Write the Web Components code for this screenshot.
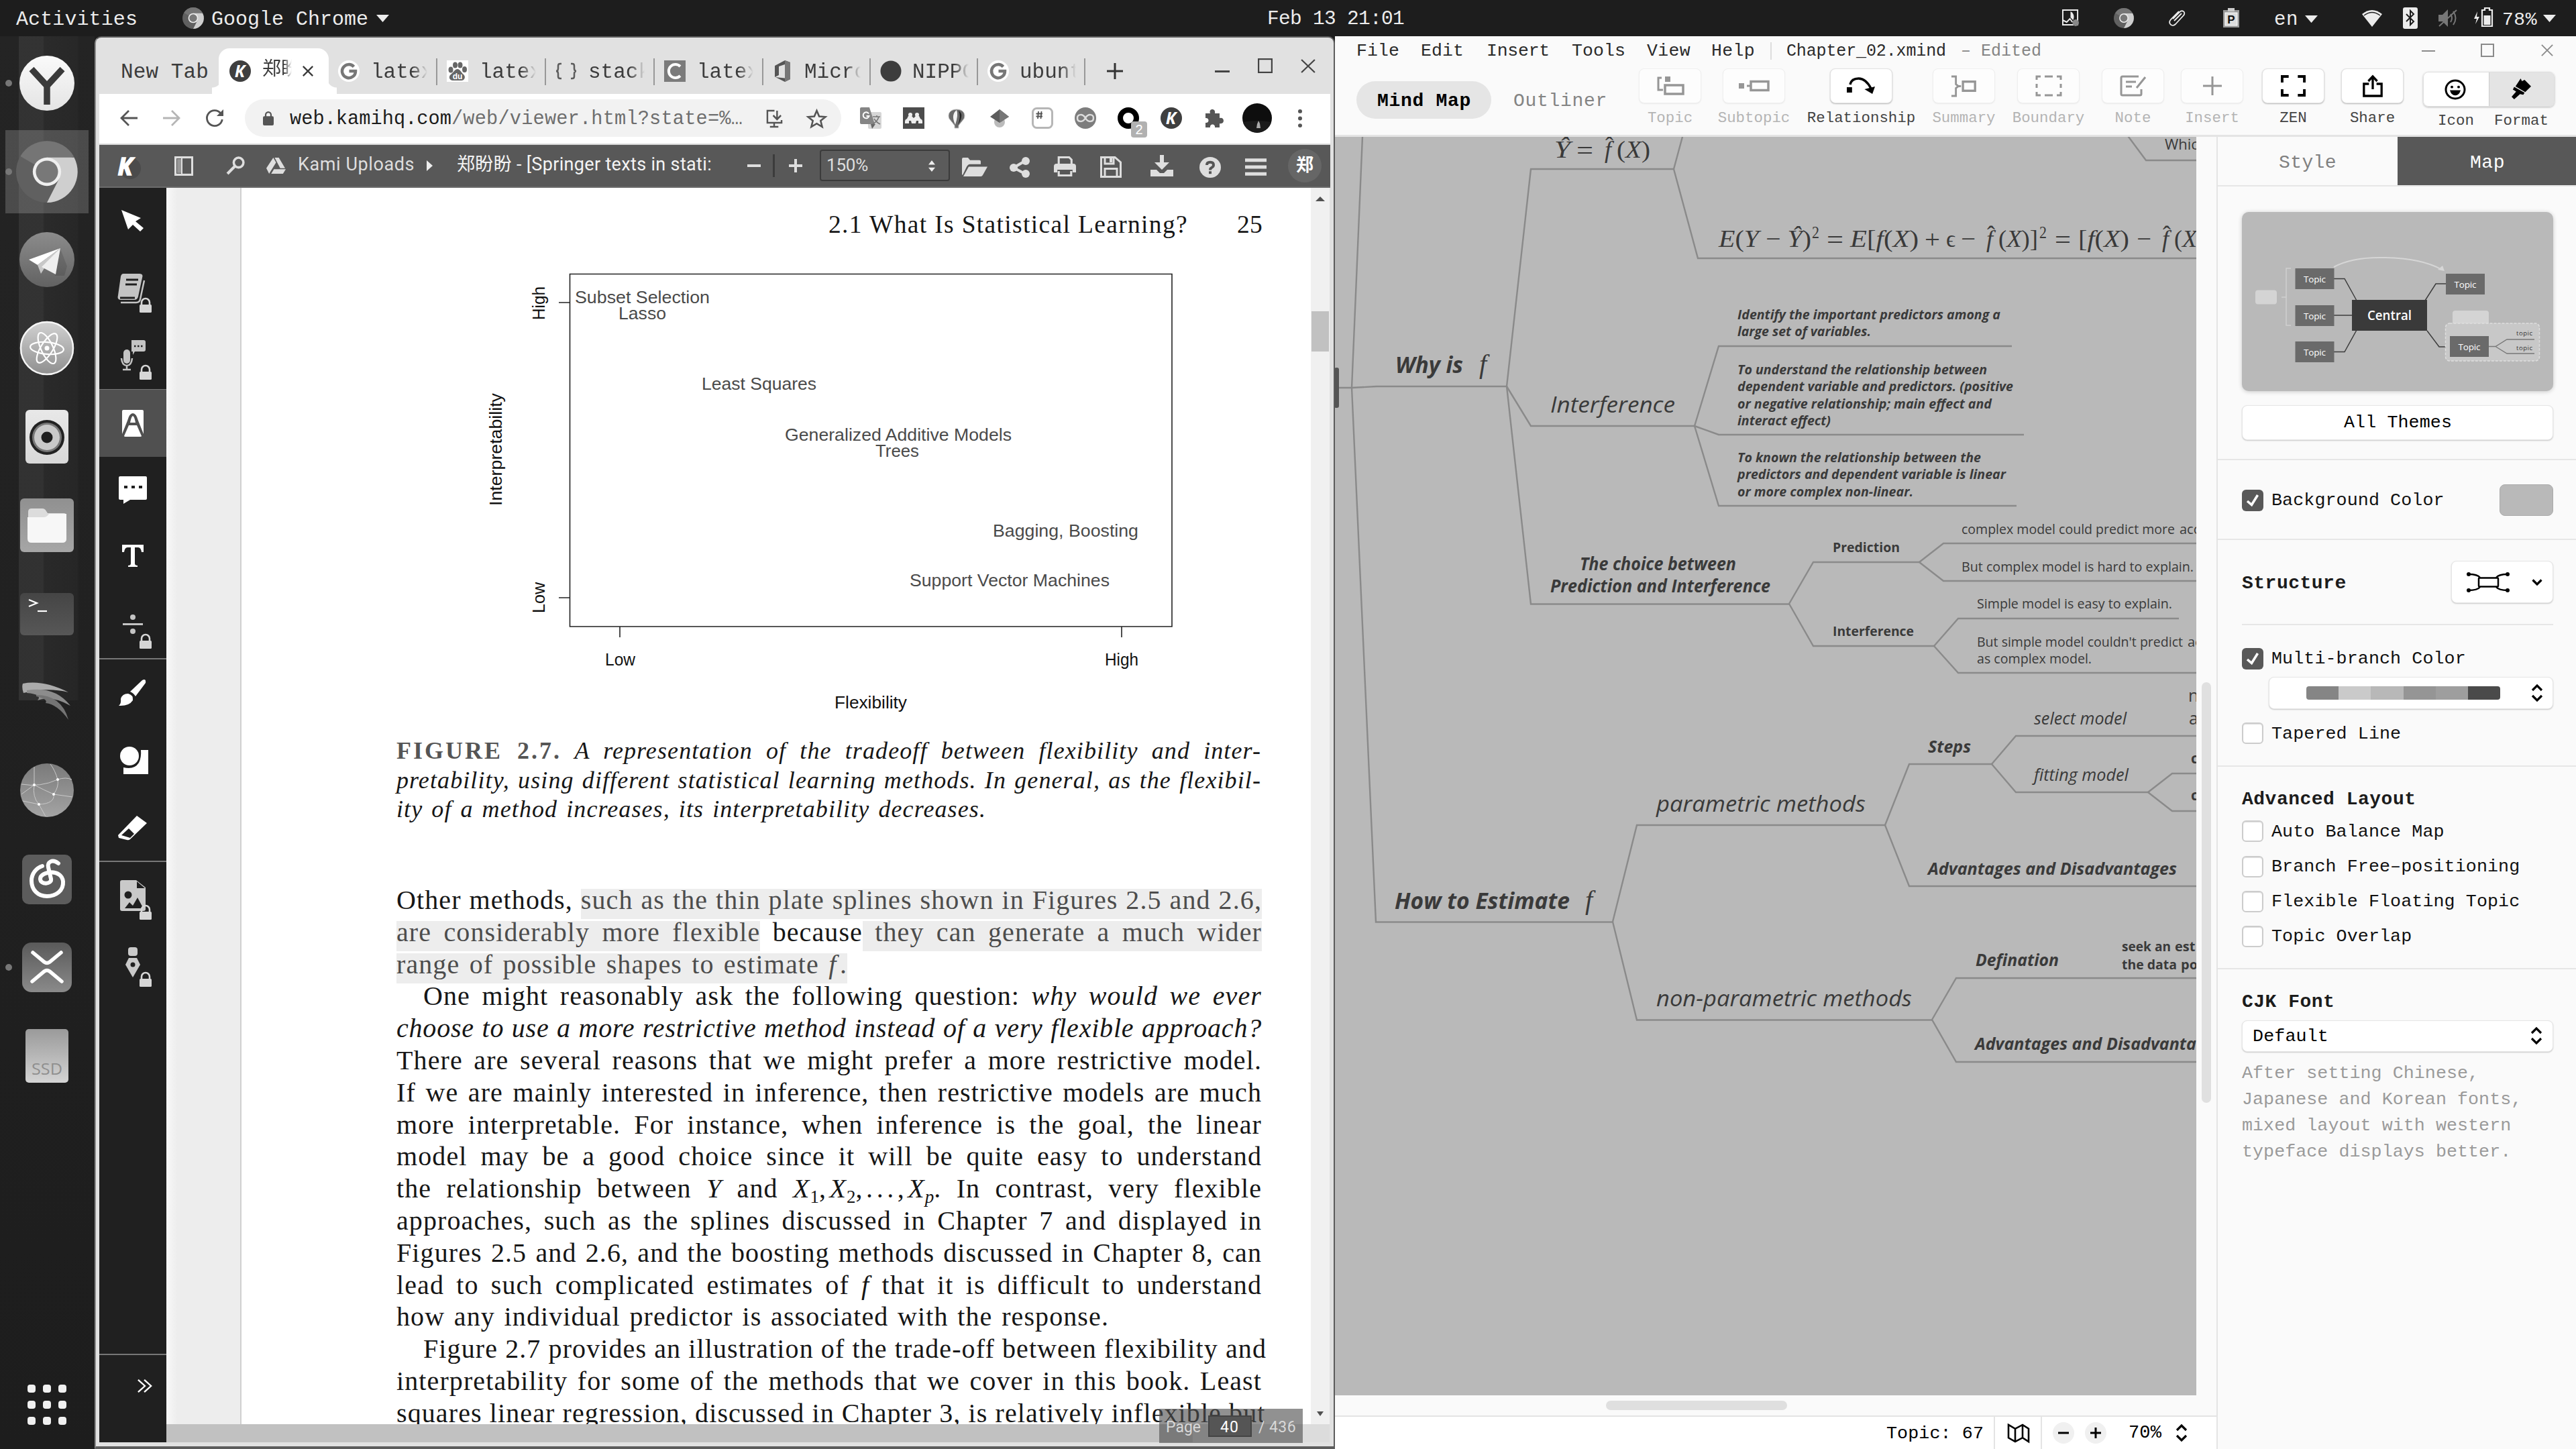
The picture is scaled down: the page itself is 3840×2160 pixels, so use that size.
<!DOCTYPE html>
<html lang="en">
<head>
<meta charset="utf-8">
<title>Desktop</title>
<style>
html,body{margin:0;padding:0;width:3840px;height:2160px;overflow:hidden;background:#1d1d1d}
</style>
</head>
<body>
<desk-top></desk-top>
<script>
const MONO = "'Liberation Mono','Noto Sans CJK SC',monospace";
const ROBO = "Roboto,'Noto Sans CJK SC',sans-serif";
const SERIF = "'Liberation Serif',serif";
const OPEN = "'Open Sans','Noto Sans',sans-serif";
// half of (ascent - descent), used to put a baseline at a given offset
const SHIFT = new Map([[MONO, .2665], [ROBO, .3418], [SERIF, .3375], [OPEN, .388]]);

const BASE = `<style>
*{box-sizing:border-box}
.row{display:flex;align-items:flex-start;flex:none}
.i{flex:none;min-width:0}
svg{display:block;overflow:visible}
</style>`;

const R = (x0, h, items, style = '') => {
  let c = x0, s = '';
  for (const it of items) {
    s += `<div class="i" style="margin-left:${(it.x - c).toFixed(1)}px;margin-top:${(it.y).toFixed(1)}px;width:${it.w}px;${it.s || ''}">${it.c || ''}</div>`;
    c = it.x + it.w;
  }
  return `<div class="row" style="height:${h}px;${style}">${s}</div>`;
};
const T = (x, b, w, size, text, style = '', fam = MONO) => ({
  x, y: b - size / 2 - SHIFT.get(fam) * size, w,
  s: `font:${size}px/${size}px ${fam};${style}`,
  c: `<fit-text w="${w}">${text}</fit-text>`
});
const I = (x, y, w, h, name, color = '#5c5c5c', extra = '') => ({ x, y, w, s: `height:${h}px;color:${color};${extra}`, c: `<ui-icon name="${name}" w="${w}" h="${h}"></ui-icon>` });
const B = (x, y, w, h, style, c = '') => ({ x, y, w, s: `height:${h}px;${style}`, c });

class Base extends HTMLElement {
  connectedCallback() {
    if (this.shadowRoot) return;
    this.attachShadow({ mode: 'open' });
    this.shadowRoot.innerHTML = BASE + this.html();
    this.ready && this.ready();
  }
}

// Text spread over a given width by letter spacing
customElements.define('fit-text', class extends Base {
  html() { return `<style>:host{display:block;white-space:pre}span{display:inline-block;letter-spacing:0}</style><span><slot></slot></span>`; }
  ready() {
    const s = this.shadowRoot.querySelector('span');
    const w = +this.getAttribute('w'), n = [...this.textContent].length;
    s.style.letterSpacing = ((w - s.getBoundingClientRect().width) / n) + 'px';
  }
});

const dock = (r, g1, g2) => `<circle cx="50" cy="50" r="${r}" fill="url(#g)"/><defs><linearGradient id="g" x1="0" y1="0" x2="0" y2="1"><stop offset="0" stop-color="${g1}"/><stop offset="1" stop-color="${g2}"/></linearGradient></defs>`;
const box = (x, y, w, h, r, g1, g2) => `<defs><linearGradient id="g" x1="0" y1="0" x2="0" y2="1"><stop offset="0" stop-color="${g1}"/><stop offset="1" stop-color="${g2}"/></linearGradient></defs><rect x="${x}" y="${y}" width="${w}" height="${h}" rx="${r}" fill="url(#g)"/>`;
const S = (w = 2) => `fill="none" stroke="currentColor" stroke-width="${w}"`;
const CHROME = `<circle cx="50" cy="50" r="50" fill="#606060"/><path d="M50 50L7 25A50 50 0 0 1 93.300 25z" fill="#757575"/><path d="M50 27H94A50 50 0 0 1 50 100L70 61z" fill="#cfcfcf"/><circle cx="50" cy="50" r="23" fill="#efefef"/><circle cx="50" cy="50" r="18" fill="#787878"/>`;
const ICONS = {
  chrome: ['0 0 100 100', CHROME],
  tri: ['0 0 20 12', `<path d="M0 0h20L10 12z" fill="currentColor"/>`],
  triR: ['0 0 9 16', `<path d="M0 0v16l9-8z" fill="currentColor"/>`],
  // dock
  dY: ['0 0 100 100', dock(41, '#fafafa', '#e4e4e4') + `<path d="M27 29L50 54L73 29M50 54V82" fill="none" stroke="#3a3a3a" stroke-width="9.500"/>`],
  dChrome: ['0 0 100 100', `<g transform="translate(4 4) scale(.92)">${CHROME}</g>`],
  dTele: ['0 0 100 100', dock(41, '#8c8c8c', '#626262') + `<path d="M70 34L80 60L76 74L62 74z" fill="#000" opacity=".12"/><path d="M70 33L23 50L36 58z" fill="#fff"/><path d="M70 33L36 58L41 71L46 63z" fill="#c8c8c8"/><path d="M70 33L42 61L63 72z" fill="#efefef"/>`],
  dAtom: ['0 0 100 100', dock(40, '#d2d2d2', '#8e8e8e') + `<circle cx="50" cy="50" r="39" fill="none" stroke="#f4f4f4" stroke-width="2.500"/><g fill="none" stroke="#fff" stroke-width="2.200"><ellipse cx="50" cy="50" rx="25" ry="9" transform="rotate(5 50 50)"/><ellipse cx="50" cy="50" rx="25" ry="9" transform="rotate(65 50 50)"/><ellipse cx="50" cy="50" rx="25" ry="9" transform="rotate(122 50 50)"/></g><circle cx="50" cy="50" r="3.500" fill="#fff"/>`],
  dSpk: ['0 0 100 100', box(18, 10, 64, 80, 6, '#e8e8e8', '#d8d8d8') + `<circle cx="50" cy="51" r="26" fill="#222"/><circle cx="50" cy="51" r="22" fill="#777"/><circle cx="50" cy="51" r="19" fill="#c9c9c9"/><circle cx="50" cy="51" r="8.500" fill="#1e1e1e"/>`],
  dFold: ['0 0 100 100', box(10, 10, 80, 80, 6, '#909090', '#a6a6a6') + `<path d="M22 30q0-5 5-5h16q4 0 6 4l2 3h24q4 0 4 4v34q0 5-5 5H27q-5 0-5-5z" fill="#dcdcdc"/><path d="M21 38h24q5 0 8-5h26v37q0 6-6 6H27q-6 0-6-6z" fill="#f7f7f7"/>`],
  dTerm: ['0 0 100 100', box(10, 19, 80, 63, 6, '#454545', '#575757') + `<path d="M23 29l12 5l-12 5" fill="none" stroke="#fff" stroke-width="2.200"/><path d="M36 46H50" stroke="#fff" stroke-width="2.200"/>`],
  dVine: ['0 0 100 100', box(0, 0, 0, 0, 0, '#aaa', '#666') + `<path d="M14 23Q44 17 82 36Q50 28 15 37Q12 28 14 23z" fill="#ababab"/><path d="M20 33Q62 26 85 56Q56 40 36 48Q44 39 20 37z" fill="#8c8c8c"/><path d="M34 40Q72 40 82 77Q66 54 48 52Q52 46 34 42z" fill="#747474"/>`],
  dNet: ['0 0 100 100', dock(40, '#7a7a7a', '#a4a4a4') + `<g fill="none" stroke="#c9c9c9" stroke-width="1"><path d="M12 41Q40 46 66 34Q78 30 87 34M31 42Q28 60 38 71Q62 70 60 56Q68 45 66 34Q62 20 55 11M31 42L31 15M31 42Q46 50 60 56L88 60M38 71L14 66M38 71L48 89M31 42L12 56"/></g><g fill="#fff"><circle cx="31" cy="42" r="2"/><circle cx="66" cy="34" r="2"/><circle cx="60" cy="56" r="2"/><circle cx="38" cy="71" r="2"/></g>`],
  dMusic: ['0 0 100 100', box(13, 14, 74, 74, 10, '#5c5c5c', '#5c5c5c') + `<g fill="none" stroke="#fff" stroke-width="6" stroke-linecap="round"><path d="M67 27C58 20 50 25 52 33L56 50C58 58 40 60 40 50C40 39 72 34 74 54C75 68 63 76 50 76C36 76 27 66 27 53C27 42 34 34 43 31"/></g>`],
  dXm: ['0 0 100 100', box(13, 13, 74, 74, 14, '#5a5a5a', '#8a8a8a') + `<path d="M29 28L46 42Q50 45 54 42L71 28M28 71L46 56Q50 53 54 56L72 71" fill="none" stroke="#fff" stroke-width="5.500" stroke-linecap="round"/>`],
  dSsd: ['0 0 100 100', box(18, 10, 64, 80, 5, '#9a9a9a', '#d4d4d4') + `<text x="50" y="78" font-family="Open Sans" font-size="24" text-anchor="middle" textLength="46" lengthAdjust="spacingAndGlyphs" fill="#8f8f8f">SSD</text>`],
  apps: ['0 0 58 60', [0, 23, 46].map(x => [0, 24, 48].map(y => `<rect x="${x}" y="${y}" width="12" height="12" rx="4" fill="#f0f0f0"/>`).join('')).join('')],
  // top bar
  shot: ['0 0 26 26', `<path d="M1 1h23v22H1zM1 16l6 3l5-5l4 5" ${S(2)}/><path d="M13 3c6 3 6 9 4 13l-4-4z" fill="currentColor"/><circle cx="21" cy="20" r="5" fill="#888"/>`],
  clip: ['0 0 28 26', `<path d="M7 14L17 4C21 0 27 4 23 9L11 22C6 27-1 21 4 15L16 3M9 17L20 6" ${S(1.800)}/>`],
  board: ['0 0 24 30', `<rect x="0" y="3" width="24" height="26" fill="#999"/><rect x="3" y="7" width="18" height="19" fill="#ddd" stroke="#fff"/><rect x="7" y="0" width="10" height="5" fill="#ccc"/><text x="12" y="23" font-family="Liberation Sans" font-size="17" font-weight="bold" text-anchor="middle" fill="#111">P</text>`],
  wifi: ['0 0 30 25', `<path d="M0 6Q15-6 30 6L15 25z" fill="currentColor"/><path d="M3 8Q15-1 27 8" fill="none" stroke="#1d1d1d" stroke-width="1.500"/>`],
  bt: ['0 0 22 32', `<rect width="22" height="32" rx="3" fill="currentColor"/><path d="M5 10L16 21L11 26V5L16 10L5 21" fill="none" stroke="#1d1d1d" stroke-width="2"/>`],
  vol: ['0 0 30 28', `<path d="M1 9h6l8-8v26l-8-8H1z" fill="currentColor"/><path d="M19 8q4 6 0 12M23 4q7 10 0 20M2 26L28 2" ${S(2)}/>`],
  batt: ['0 0 30 30', `<path d="M5 6L0 17h4l-2 8l6-11H4z" fill="currentColor"/><path d="M16 1h7v3h4v24H12V4h4z" ${S(2.200)}/><rect x="14.500" y="12" width="10" height="14" fill="currentColor"/>`],
  // browser
  kfav: ['0 0 32 32', `<circle cx="16" cy="16" r="16" fill="#3f3f3f"/><text x="15.500" y="25" font-family="Open Sans" font-size="25" font-weight="bold" font-style="italic" text-anchor="middle" fill="#fff">K</text>`],
  k: ['0 0 36 38', `<circle cx="20" cy="22" r="16" fill="#4b4b4b"/><text x="12.500" y="31.500" font-family="Open Sans" font-size="36" font-weight="bold" font-style="italic" text-anchor="middle" textLength="22" lengthAdjust="spacingAndGlyphs" fill="#fff" stroke="#fff" stroke-width="1.500">K</text>`],
  g: ['0 0 32 32', `<circle cx="16" cy="16" r="16" fill="#fff"/><path d="M23.500 9.500A10 10 0 1 0 26 16H16.500" fill="none" stroke="#777" stroke-width="4.500"/>`],
  paw: ['0 0 32 32', `<rect width="32" height="32" fill="#fff"/><g fill="#666"><ellipse cx="6" cy="14" rx="3.500" ry="4.500"/><ellipse cx="12.500" cy="7" rx="3.500" ry="4.500"/><ellipse cx="20" cy="7" rx="3.500" ry="4.500"/><ellipse cx="26.500" cy="13.500" rx="3.500" ry="4.500"/><path d="M16 13c4 0 6 6 9 8c4 4 1 9-3 9H9c-5 0-7-6-3-9c4-3 6-8 10-8z"/></g><text x="16" y="28" font-size="12" font-weight="bold" font-family="Liberation Sans" text-anchor="middle" fill="#fff">du</text>`],
  braces: ['0 0 32 32', `<path d="M9 5H7Q4 5 4 8v4q0 4-3 4q3 0 3 4v4q0 3 3 3h2M23 5h2q3 0 3 3v4q0 4 3 4q-3 0-3 4v4q0 3-3 3h-2" ${S(2.500)}/>`],
  cfav: ['0 0 32 32', `<rect width="32" height="32" fill="#7b7b7b"/><path d="M24 9A10 10 0 1 0 24 23" fill="none" stroke="#fff" stroke-width="4"/>`],
  office: ['0 0 32 32', `<path d="M4 8L19 0L27 3V28L19 32L5 25L19 26.500V6L10 9V22L4 25z" fill="#555"/><path d="M19 0L27 3V28L19 32z" fill="#777"/>`],
  dot: ['0 0 32 32', `<circle cx="16" cy="16" r="15.500" fill="#3d3d3d"/>`],
  x: ['0 0 20 20', `<path d="M2 2L18 18M18 2L2 18" ${S(2.600)}/>`],
  xthin: ['0 0 20 20', `<path d="M1 1L19 19M19 1L1 19" ${S(2)}/>`],
  plus: ['0 0 24 24', `<path d="M12 0V24M0 12H24" ${S(3)}/>`],
  back: ['0 0 26 24', `<path d="M26 12H2M13 1L2 12L13 23" ${S(2.800)}/>`],
  fwd: ['0 0 26 24', `<path d="M0 12H24M13 1L24 12L13 23" ${S(2.800)}/>`],
  reload: ['0 0 28 28', `<path d="M23 7A11.500 11.500 0 1 0 25.300 16" ${S(2.800)}/><path d="M27 1V11H17z" fill="currentColor"/>`],
  lock: ['0 0 16 20', `<rect y="7" width="16" height="13" rx="2" fill="currentColor"/><path d="M4 8V5a4 4 0 0 1 8 0V8" ${S(2.200)}/>`],
  inst: ['0 0 26 26', `<path d="M13 1H2V19H24V15M6 25H19M12.500 19V25" ${S(2.500)}/><path d="M17 1V13M11 8L17 14L23 8" ${S(2.500)}/>`],
  star: ['0 0 28 28', `<path d="M14 2L17.500 10.500L26.500 11.200L19.600 17L21.800 26L14 21.200L6.200 26L8.400 17L1.500 11.200L10.500 10.500z" ${S(2.500)}/>`],
  trans: ['0 0 32 32', `<rect x="12" y="7" width="20" height="25" rx="2" fill="#d6d6d6"/><path d="M2 0H14L22 25H2Q0 25 0 23V2Q0 0 2 0z" fill="#858585"/><path d="M16 25h7l-5 7z" fill="#666"/><path d="M13 9.500A4.500 4.500 0 1 0 13.500 13H9.500" fill="none" stroke="#fff" stroke-width="2"/><path d="M19 14H30M25 12V14M28 14Q26 21 19 25M21 17Q25 23 30 25" stroke="#777" stroke-width="1.600" fill="none"/>`],
  mend: ['0 0 32 32', `<rect width="32" height="32" fill="#4c4c4c"/><circle cx="11" cy="11" r="3" fill="#eee"/><circle cx="21" cy="11" r="3" fill="#eee"/><path d="M3 24v-3q0-3 3-4l2-4h5l3 3l3-3h5l2 4q3 1 3 4v3h-6v-4h-3l-1 4h-6l-1-4h-3v4z" fill="#eee"/>`],
  ball: ['0 0 26 32', `<path d="M13 2C23 2 27 9 24 16L16 26V30H10V26L2 16C-1 9 3 2 13 2z" fill="#6a6a6a" stroke="#c4c4c4"/><path d="M13 3Q4 10 11 25Q16 10 13 3z" fill="#f2f2f2"/><path d="M16 4Q25 10 15 25Q20 12 16 4z" fill="#222"/>`],
  schol: ['0 0 28 28', `<circle cx="14" cy="20" r="8" fill="#bbb"/><path d="M14 1L28 12L14 21L0 12z" fill="#5c5c5c"/><path d="M14 1V21L28 12z" fill="#777"/>`],
  hash: ['0 0 32 32', `<rect x="1.500" y="1.500" width="29" height="29" rx="6" fill="#fff" stroke="#b6b6b6" stroke-width="3"/><path d="M10 6L9 17M14.500 6L13.500 17M6.500 9.500H16M6.500 13.500H16" stroke="#555" stroke-width="1.800"/>`],
  inf: ['0 0 32 32', `<circle cx="16" cy="16" r="16" fill="#7d7d7d"/><path d="M16 16C12 9 4 10 4 16s8 7 12 0s12-6 12 0s-8 7-12 0z" fill="none" stroke="#ddd" stroke-width="2.500"/>`],
  ring: ['0 0 44 46', `<circle cx="16" cy="17" r="12" fill="none" stroke="#000" stroke-width="8"/><rect x="20" y="22" width="24" height="24" rx="4" fill="#b1b1b1"/><text x="32" y="41" font-family="Liberation Sans" font-size="20" text-anchor="middle" fill="#fff">2</text>`],
  puzzle: ['0 0 28 28', `<path d="M1 7h7c-3-8 9-8 7 0h7v7c8-2 8 10 0 8v6h-7c1-6-8-6-7 0H1v-7c6 1 6-8 0-7z" fill="currentColor"/>`],
  avatar: ['0 0 44 44', `<circle cx="22" cy="22" r="22" fill="#0e0e0e"/><path d="M1 28Q22 24 43 28A22 22 0 0 1 1 28z" fill="#1b1b1b"/><path d="M24 26l2 4l1 7h-6l1-6z" fill="#aaa"/>`],
  kebab: ['0 0 6 28', `<circle cx="3" cy="3" r="3" fill="currentColor"/><circle cx="3" cy="14" r="3" fill="currentColor"/><circle cx="3" cy="25" r="3" fill="currentColor"/>`],
  // document toolbar
  side: ['0 0 28 28', `<rect x="1.500" y="1.500" width="25" height="25" ${S(3)}/><rect x="4" y="4" width="7" height="20" fill="#999"/><path d="M11 2V26" ${S(2)}/>`],
  search: ['0 0 26 26', `<circle cx="17" cy="9" r="7" ${S(3.400)}/><path d="M12 14L1 25" ${S(4)}/>`],
  drive: ['0 0 28 24', `<path d="M10 0L0 15L4 23L14 7zM12 0H18L27 15H20zM11 16.500H28L24 23H7z" fill="currentColor"/>`],
  minus: ['0 0 20 4', `<rect width="20" height="4" fill="currentColor"/>`],
  kplus: ['0 0 20 20', `<path d="M10 0V20M0 10H20" ${S(4)}/>`],
  updown: ['0 0 10 16', `<path d="M0 6L5 0L10 6zM0 10L5 16L10 10z" fill="currentColor"/>`],
  open: ['0 0 38 30', `<path d="M0 27V3Q0 1 2 1H9L12 5H26Q28 5 28 7V11H12Q9 11 7 15L1 28z" fill="currentColor"/><path d="M10 15H38L31 28Q30 30 28 30H2z" fill="currentColor"/>`],
  share: ['0 0 32 30', `<path d="M24 6L7 16L24 25" ${S(4)}/><circle cx="25" cy="6" r="6" fill="currentColor"/><circle cx="7" cy="16" r="6" fill="currentColor"/><circle cx="25" cy="25" r="6" fill="currentColor"/>`],
  print: ['0 0 32 30', `<path d="M7 12V1.500H22L25.500 5V12" ${S(3)}/><path d="M4 11H28Q32 11 32 15V24H27V20H5V24H0V15Q0 11 4 11z" fill="currentColor"/><path d="M7 22V28.500H25V22" ${S(3)}/>`],
  save: ['0 0 32 32', `<path d="M1.500 1.500H22L30.500 9V30.500H1.500zM7 1.500V11H20V1.500M7 30V18.500H25V30" ${S(3)}/><rect x="14" y="3" width="4" height="6" fill="currentColor"/>`],
  down: ['0 0 34 32', `<path d="M14 0H20V11H28L17 22L6 11H14z" fill="currentColor"/><path d="M0 22H9L14 27H20L25 22H34V32H0z" fill="currentColor"/>`],
  help: ['0 0 32 32', `<circle cx="16" cy="16" r="16" fill="currentColor"/><path d="M11 12.500Q11 8 16 8T21 12.500Q21 15 18 16.500Q16 17.500 16 20" fill="none" stroke="#555" stroke-width="4"/><rect x="14" y="22" width="4" height="4" fill="#555"/>`],
  burger: ['0 0 32 28', `<path d="M0 3H32M0 14H32M0 25H32" ${S(5.500)}/>`],
  // tool column, 100 x 100
  arrow: ['0 0 100 100', `<path d="M33 33L62 45L54 50L66 60L61 65L50 55L43 62z" fill="#fff"/>`],
  book: ['0 0 100 100', `<path d="M36 28H60Q66 28 64 34L58 62Q57 67 52 67H32Q26 67 28 60L32 32Q33 28 36 28z" fill="#c4c4c4"/><path d="M40 37H58M39 44H56M31 64H53" stroke="#202020" stroke-width="2.800"/><path d="M67 38L61 66Q60 71 55 71H32" fill="none" stroke="#c4c4c4" stroke-width="2.500"/>LOCK`],
  mic: ['0 0 100 100', `<path d="M48 27H66Q69 27 69 30V41Q69 44 66 44H53L50 49V44H48z" fill="#c4c4c4"/><path d="M52 36H65" stroke="#202020" stroke-width="2.500" stroke-dasharray="2.500 2.500"/><rect x="36" y="41" width="10" height="21" rx="5" fill="#c4c4c4"/><path d="M33 54Q34 65 41 65T49 54M41 65V70M35 71H47" fill="none" stroke="#c4c4c4" stroke-width="2.500"/>LOCK`],
  mark: ['0 0 100 100', `<path d="M36 30H64Q66 30 66 32V66L58 46Q55 35 50 35T42 46L34 66V32Q34 30 36 30z" fill="#fff"/><path d="M44 53H56L63 69Q63 70 61 70H39Q37 70 37 69z" fill="#fff"/><path d="M50 39Q52 39 54 49H46Q48 39 50 39z" fill="#fff"/>`],
  talk: ['0 0 100 100', `<path d="M31 29H69Q71 29 71 31V62Q71 64 69 64H46L36 70V64H31Q29 64 29 62V31Q29 29 31 29z" fill="#fff"/><path d="M37 45H64" stroke="#202020" stroke-width="4" stroke-dasharray="5 6"/>`],
  tee: ['0 0 100 100', `<path d="M34 31H66V42H63Q62 35 58 35H53V59Q53 62 57 62V64H43V62Q47 62 47 59V35H42Q38 35 37 42H34z" fill="#fff"/>`],
  div: ['0 0 100 100', `<path d="M35 49.500H65" stroke="#c4c4c4" stroke-width="3"/><circle cx="50" cy="39" r="4" fill="#c4c4c4"/><circle cx="50" cy="60" r="4" fill="#c4c4c4"/>LOCK`],
  brush: ['0 0 100 100', `<path d="M46 48L64 31Q70 28 69 35L54 55Q51 50 46 48z" fill="#fff"/><path d="M43 51Q51 53 50 61Q44 70 29 69Q33 66 32 59Q34 51 43 51z" fill="#fff"/>`],
  shapes: ['0 0 100 100', `<path d="M62 35H73V71H36V61Q52 65 59 54Q63 46 62 35z" fill="#fff"/><circle cx="45" cy="44" r="14" fill="#fff"/>`],
  eraser: ['0 0 100 100', `<path d="M28 62L56 33L71 44L46 68Q44 70 41 69L29 66z" fill="#fff"/><path d="M33 62L44 52L52 60L46 66z" fill="#202020"/>`],
  pic: ['0 0 100 100', `<path d="M34 27H55L69 38V70Q69 73 66 73H34Q31 73 31 70V30Q31 27 34 27z" fill="#c9c9c9"/><path d="M56 29V39H68M38 69L45 60L50 65L57 53L64 66V69z" fill="#202020"/><circle cx="43" cy="49" r="5.500" fill="#202020"/>LOCK`],
  pen: ['0 0 100 100', `<rect x="43" y="27" width="14" height="13" rx="4" fill="#c9c9c9"/><path d="M44 43H56L61 53L50 72L39 53z" fill="#c9c9c9"/><circle cx="50" cy="53" r="3.500" fill="#202020"/>LOCK`],
  more: ['0 0 24 22', `<path d="M1 1L12 11L1 21M11 1L22 11L11 21" ${S(2.500)}/>`],
  // mind map toolbar
  topic: ['0 0 40 30', `<rect x="12" y="1" width="8" height="8" fill="currentColor"/><path d="M7 3H2V21H9" ${S(3)}/><rect x="12" y="14" width="27" height="13" ${S(3.500)}/>`],
  sub: ['0 0 46 16', `<rect x="0" y="4" width="8" height="8" fill="currentColor"/><path d="M12 8H17" ${S(3)}/><rect x="18" y="1.500" width="26" height="13" ${S(3.500)}/>`],
  rel: ['0 0 44 26', `<rect x="0" y="15" width="8" height="8" fill="currentColor"/><path d="M5 11Q7 2 18 2T37 17" ${S(3.500)}/><path d="M27 18L43 14L39 25z" fill="currentColor"/>`],
  sum: ['0 0 42 34', `<path d="M1 2H8V14L12 17L8 20V32H1M12 17H16" ${S(3)}/><rect x="19" y="10" width="19" height="14" ${S(3.500)}/>`],
  bound: ['0 0 40 32', `<path d="M2 7V2H8M14 2H20M26 2H26M20 2H26M32 2H38V7M38 13V19M38 25V30H32M26 30H20M14 30H14M20 30H14M8 30H2V25M2 19V13" ${S(3)}/>`],
  note: ['0 0 40 32', `<path d="M28 2H4Q2 2 2 4V28Q2 30 4 30H30Q32 30 32 28V21M9 10H24M9 17H18M38 3L25 19" ${S(3)}/>`],
  ins: ['0 0 28 28', `<path d="M14 0V28M0 14H28" ${S(3)}/>`],
  zen: ['0 0 38 32', `<path d="M2 11V2H12M26 2H36V11M36 21V30H26M12 30H2V21" ${S(4)}/>`],
  shr: ['0 0 34 34', `<path d="M11 14H3V32H31V14H23" ${S(3.500)}/><path d="M17 22V3M10 10L17 3L24 10" ${S(3.500)}/>`],
  smile: ['0 0 32 32', `<circle cx="16" cy="16" r="14" ${S(3)}/><circle cx="11" cy="12" r="2" fill="currentColor"/><circle cx="21" cy="12" r="2" fill="currentColor"/><path d="M8 17H24Q22 25 16 25T8 17z" fill="currentColor"/>`],
  fmt: ['0 0 30 32', `<path d="M14 0L16 4L20 2L30 12L21 21L6 12z" fill="currentColor"/><path d="M4 13L20 22L18 25L13 24L4 32L0 28L7 20L2 17z" fill="currentColor"/>`],
  sq: ['0 0 20 20', `<rect x="1" y="1" width="18" height="18" ${S(2)}/>`],
  line: ['0 0 20 2', `<rect width="20" height="2" fill="currentColor"/>`],
  chev2: ['0 0 18 28', `<path d="M2 10L9 3L16 10M2 18L9 25L16 18" ${S(3.200)}/>`],
  chev: ['0 0 16 10', `<path d="M1.500 1.500L8 8L14.500 1.500" ${S(3.200)}/>`],
  struct: ['0 0 64 30', `<rect x="18" y="8.500" width="29" height="13" rx="1" ${S(2.500)}/><path d="M3 3Q16 3 20 8M61 3Q48 3 44 8M3 27Q16 27 20 22M61 27Q48 27 44 22" ${S(2.400)}/><circle cx="3" cy="3" r="3"/><circle cx="61" cy="3" r="3"/><circle cx="3" cy="27" r="3"/><circle cx="61" cy="27" r="3"/>`],
  map: ['0 0 34 30', `<path d="M2 2L12 8L23 2L32 8V28L23 22L12 28L2 22zM12 8V28M23 2V22" ${S(2.600)}/>`],
};
const LOCK = `<rect x="60" y="74" width="18" height="12" rx="1.500" fill="#d6d6d6"/><path d="M63 75V71a6 6 0 0 1 12 0V75" fill="none" stroke="#d6d6d6" stroke-width="2.600"/>`;

customElements.define('ui-icon', class extends Base {
  html() {
    const [vb, body] = ICONS[this.getAttribute('name')];
    return `<style>:host{display:block}</style><svg width="${this.getAttribute('w')}" height="${this.getAttribute('h')}" viewBox="${vb}" preserveAspectRatio="none">${body.replace('LOCK', LOCK)}</svg>`;
  }
});

customElements.define('top-bar', class extends Base {
  html() {
    const w = '#ececec';
    return `<style>:host{display:block;height:54px;background:#1d1d1d;color:#ececec}</style>` + R(0, 54, [
      T(24, 37, 181, 30, 'Activities'), I(272, 11, 32, 32, 'chrome'),
      T(315, 37, 234, 30, 'Google Chrome'), I(561, 22, 19, 11, 'tri', w),
      T(1889, 37, 204, 29.5, 'Feb 13 21:01'),
      I(3074, 14, 25, 26, 'shot', w), I(3151, 12, 30, 30, 'chrome'), I(3232, 14, 28, 26, 'clip', w), I(3314, 12, 24, 30, 'board'),
      T(3390, 37, 36, 29, 'en'), I(3436, 23, 19, 11, 'tri', w),
      I(3521, 15, 30, 25, 'wifi', w), I(3582, 11, 22, 32, 'bt', w), I(3634, 13, 30, 28, 'vol', '#777'), I(3688, 11, 30, 30, 'batt', w),
      T(3730, 37, 52, 28, '78%'), I(3791, 22, 19, 11, 'tri', w)]);
  }
});

customElements.define('app-dock', class extends Base {
  html() {
    const names = ['dY', 'dChrome', 'dTele', 'dAtom', 'dSpk', 'dFold', 'dTerm', 'dVine', 'dNet', 'dMusic', 'dXm', 'dSsd'];
    return `<style>:host{display:flex;flex-direction:column;width:141px;height:2106px;padding-top:4px;background:linear-gradient(90deg,transparent 28px,#40404088 28px,#3a3a3aaa 64px,#33333377 66px,#2c2c2c77 115px,transparent 118px) 0 0/141px 990px no-repeat,linear-gradient(#242424,#1d1d1d)}
    .it{height:131.800px;flex:none;display:flex;align-items:center}
    .d{width:10px;height:10px;border-radius:5px;background:#777;margin-left:8px;margin-right:2px}.n{width:20px}
    .a{background:linear-gradient(#ffffff2e,#ffffff2e) 8px 4px/124px 124px no-repeat}
    .apps{margin:auto 0 36px 41px}</style>` +
      names.map((n, k) => `<div class="it ${k == 1 ? 'a' : ''}"><div class="${[0, 1, 10].includes(k) ? 'd' : 'n'}"></div><ui-icon name="${n}" w="100" h="100"></ui-icon></div>`).join('') +
      `<div class="apps"><ui-icon name="apps" w="58" h="60"></ui-icon></div>`;
  }
});

customElements.define('tab-strip', class extends Base {
  html() {
    const M = '-webkit-mask:linear-gradient(90deg,#000 74%,transparent);overflow:hidden;white-space:nowrap;color:#3c3c3c;';
    const P = (x, w, t, tw) => { const o = T(x, 58, tw, 31, t, M); o.w = w; o.s += 'height:40px;'; return o; };
    const sep = x => B(x, 29, 2, 40, 'background:#989898');
    const c = '#3c3c3c';
    return `<style>:host{display:block;height:82px;background:#e1e1e1}</style>` + R(148, 82, [
      T(180, 58, 131, 31, 'New Tab', 'color:#3c3c3c'),
      B(316, 58, 10, 24, 'background:radial-gradient(circle at 0 0,#e1e1e1 14px,#fff 15px)'),
      B(326, 14, 164, 68, 'background:#fff;border-radius:16px 16px 0 0', R(0, 68, [
        I(16, 18, 32, 32, 'kfav'), B(65, 15, 44, 40, M + `font:28px/36px ${MONO}`, '郑盼'), I(124, 25, 18, 18, 'x', c)])),
      B(490, 58, 12, 24, 'background:radial-gradient(circle at 100% 0,#e1e1e1 14px,#fff 15px)'),
      I(504, 32, 32, 32, 'g'), P(553, 84, 'latex', 93), sep(650),
      I(666, 32, 32, 32, 'paw'), P(715, 84, 'latex', 93), sep(812),
      I(828, 32, 32, 32, 'braces'), P(877, 84, 'stack', 93), sep(974),
      I(990, 32, 32, 32, 'cfav'), P(1039, 84, 'latex', 93), sep(1136),
      I(1151, 32, 32, 32, 'office'), P(1199, 84, 'Micro', 93), sep(1296),
      I(1312, 32, 32, 32, 'dot'), P(1360, 84, 'NIPPO', 93), sep(1456),
      I(1472, 32, 32, 32, 'g'), P(1520, 84, 'ubunt', 93), sep(1616),
      I(1650, 36, 24, 24, 'plus', '#333'),
      I(1811, 47, 22, 3, 'line', '#444'), I(1875, 29, 22, 22, 'sq', '#444'), I(1939, 30, 22, 21, 'xthin', '#444')]);
  }
});

customElements.define('address-bar', class extends Base {
  html() {
    const c = '#555';
    return `<style>:host{display:block;height:76px;background:#fff;border-bottom:2px solid #d8d8d8}</style>` + R(148, 74, [
      I(179, 24, 26, 24, 'back', c), I(243, 24, 26, 24, 'fwd', '#b5b5b5'), I(306, 22, 28, 28, 'reload', c),
      B(365, 8, 889, 56, 'background:#f2f2f2;border-radius:28px', R(365, 56, [
        I(392, 18, 16, 21, 'lock', c), T(432, 38, 241, 28.6, 'web.kamihq.com', 'color:#1c1c1c'),
        T(673, 38, 434, 28.6, '/web/viewer.html?state=%…', 'color:#6e6e6e'),
        I(1142, 16, 25, 26, 'inst', c), I(1203, 15, 29, 28, 'star', c)])),
      I(1282, 20, 32, 32, 'trans'), I(1346, 20, 32, 32, 'mend'), I(1413, 21, 26, 32, 'ball'), I(1476, 22, 28, 28, 'schol'), I(1538, 20, 32, 32, 'hash'),
      I(1602, 20, 32, 32, 'inf'), I(1666, 19, 44, 46, 'ring'), I(1730, 20, 32, 32, 'kfav'), I(1796, 22, 28, 28, 'puzzle', '#555'), I(1852, 14, 44, 44, 'avatar'), I(1935, 23, 6, 27, 'kebab', c)]);
  }
});

customElements.define('doc-toolbar', class extends Base {
  html() {
    const c = '#dedede';
    return `<style>:host{display:block;height:64px;background:#585858;color:#dedede;border-bottom:2px solid #6b6b6b}</style>` + R(148, 62, [
      I(174, 13, 36, 38, 'k'), I(260, 17, 28, 29, 'side', c), I(338, 17, 27, 27, 'search', c), I(397, 19, 29, 25, 'drive', c),
      T(444, 39, 174, 27, 'Kami Uploads', '', ROBO), I(636, 23, 9, 16, 'triR', '#eee'),
      T(681, 39, 380, 27, '郑盼盼 - [Springer texts in stati:', 'color:#f4f4f4', ROBO),
      I(1114, 29, 20, 4, 'minus', c), B(1152, 14, 3, 34, 'background:#3c3c3c'), I(1176, 21, 20, 20, 'kplus', c),
      B(1222, 7, 194, 47, 'border:2px solid #3b3b3b;border-radius:4px;background:#5b5b5b', R(1224, 43, [T(1232, 30, 62, 26, '150%', '', ROBO), I(1384, 14, 10, 17, 'updown', '#eee')])),
      I(1434, 18, 38, 29, 'open', c), I(1504, 18, 32, 30, 'share', c), I(1571, 17, 33, 30, 'print', c), I(1640, 17, 32, 32, 'save', c),
      I(1715, 15, 34, 32, 'down', c), I(1788, 18, 32, 31, 'help', c), I(1856, 20, 32, 26, 'burger', c),
      B(1920, 6, 50, 50, `background:#666;border-radius:25px;color:#fff;text-align:center;font:bold 26px/48px ${ROBO}`, '郑')]);
  }
});

customElements.define('tool-column', class extends Base {
  html() {
    const g = a => a.map(n => `<div class="t ${n == 'mark' ? 'on' : ''}"><ui-icon name="${n}" w="100" h="100"></ui-icon></div>`).join('');
    return `<style>:host{display:flex;flex-direction:column;width:100px;height:1870px;background:#202020}
    .t{height:100px;flex:none}.on{background:#505050;border-top:1px solid #777;height:101px}.l{height:2px;background:#777;flex:none}
    .m{margin:36px 0 0 57px;height:94px}.e{margin-top:auto}</style>` +
      g(['arrow', 'book', 'mic', 'mark', 'talk', 'tee', 'div']) + `<div class="l"></div>` + g(['brush', 'shapes', 'eraser']) + `<div class="l"></div>` + g(['pic', 'pen']) +
      `<div class="l e"></div><div class="m" style="color:#fff"><ui-icon name="more" w="22" h="20"></ui-icon></div>`;
  }
});

// A line of book text, justified over its own width
customElements.define('book-line', class extends Base {
  html() {
    const a = n => this.getAttribute(n);
    return `<style>:host{display:block;height:${a('h')}px;line-height:${a('h')}px;width:${a('w')}px;margin-left:${a('in') || 0}px;text-align:justify;text-align-last:justify;white-space:nowrap}</style><slot></slot>`;
  }
});

customElements.define('trade-chart', class extends Base {
  html() {
    const t = (x, y, w, s, c = '#4a4a4a') => `<text x="${x}" y="${y}" textLength="${w}" lengthAdjust="spacingAndGlyphs" fill="${c}">${s}</text>`;
    const r = (x, y, w, s) => `<text transform="translate(${x} ${y}) rotate(-90)" textLength="${w}" lengthAdjust="spacingAndGlyphs" fill="#111">${s}</text>`;
    return `<style>:host{display:block;height:700px;letter-spacing:0}text{font:25.500px 'Liberation Sans',sans-serif}</style>
    <svg width="1594" height="700" viewBox="360 380 1594 700"><path d="M849.500 408.500H1747V934H849.500zM833 451H849M833 891H849M924 934V950M1672 934V950" fill="none" stroke="#222" stroke-width="1.600"/>` +
      t(857, 452, 201, 'Subset Selection') + t(922, 476, 71, 'Lasso') + t(1046, 581, 171, 'Least Squares') + t(1170, 657, 338, 'Generalized Additive Models') +
      t(1305, 681, 65, 'Trees') + t(1480, 800, 217, 'Bagging, Boosting') + t(1356, 874, 298, 'Support Vector Machines') +
      t(902, 992, 45, 'Low', '#111') + t(1647, 992, 50, 'High', '#111') + t(1244, 1056, 108, 'Flexibility', '#111') +
      r(812, 477, 50, 'High') + r(812, 914, 46, 'Low') + r(748, 754, 168, 'Interpretability') + `</svg>`;
  }
});

customElements.define('book-page', class extends Base {
  html() {
    const L = (s, w = 1290, ind = 0, h = 47.8) => `<book-line w="${w}" in="${ind}" h="${h}">${s}</book-line>`;
    const C = (s, w = 1289) => L(s, w, 0, 43.7);
    return `<style>:host{display:block;width:1596px;height:1843px;overflow:hidden;background:#fff;border-left:2px solid #d0d0d0;font:40px ${SERIF};color:#161616;letter-spacing:1.100px}
    .head{display:flex;height:100px}
    .cap{margin:18px 0 0 231px;font-size:36px;font-style:italic;letter-spacing:1.100px}
    .cap b{font-style:normal;color:#555;letter-spacing:3px;font-size:36px}
    .body{margin:89px 0 0 231px}
    mark{color:#4c4c4c;padding-bottom:6px;background:linear-gradient(#ededed,#ededed) 0 100%/100% 45px no-repeat}
    sub{font-size:27px;line-height:0;vertical-align:-8px;letter-spacing:0}</style>
    <div class="head">` + R(360, 100, [T(1235, 67, 536, 37.5, '2.1 What Is Statistical Learning?', '', SERIF), T(1844, 67, 38, 37.5, '25', '', SERIF)]) + `</div>
    <trade-chart></trade-chart>
    <div class="cap">` +
      C('<b>FIGURE 2.7.</b> A representation of the tradeoff between flexibility and inter-') +
      C('pretability, using different statistical learning methods. In general, as the flexibil-') +
      C('ity of a method increases, its interpretability decreases.', 879) + `</div><div class="body">` +
      L('Other methods, <mark>such as the thin plate splines shown in Figures 2.5 and 2.6,</mark>') +
      L('<mark>are considerably more flexible</mark> because<mark> they can generate a much wider</mark>') +
      L('<mark>range of possible shapes to estimate <i>f</i>&#8202;.</mark>', 672) +
      L('One might reasonably ask the following question: <i>why would we ever</i>', 1250, 40) +
      L('<i style="letter-spacing:.8px">choose to use a more restrictive method instead of a very flexible approach?</i>') +
      L('There are several reasons that we might prefer a more restrictive model.') +
      L('If we are mainly interested in inference, then restrictive models are much') +
      L('more interpretable. For instance, when inference is the goal, the linear') +
      L('model may be a good choice since it will be quite easy to understand') +
      L('the relationship between <i>Y</i> and <i>X</i><sub>1</sub>,&#8202;<i>X</i><sub>2</sub>,&#8202;.&#8202;.&#8202;.&#8202;,&#8202;<i>X<sub>p</sub></i>. In contrast, very flexible') +
      L('approaches, such as the splines discussed in Chapter 7 and displayed in') +
      L('Figures 2.5 and 2.6, and the boosting methods discussed in Chapter 8, can') +
      L('lead to such complicated estimates of <i>f</i> that it is difficult to understand') +
      L('how any individual predictor is associated with the response.', 1062) +
      L('Figure 2.7 provides an illustration of the trade-off between flexibility and', 1250, 40) +
      L('interpretability for some of the methods that we cover in this book. Least') +
      L('squares linear regression, discussed in Chapter 3, is relatively inflexible but') + `</div>`;
  }
});

customElements.define('page-badge', class extends Base {
  html() {
    return `<style>:host{display:block;position:absolute;left:1480px;top:1820px;width:214px;height:51px;background:#505050a0;color:#d8d8d8}</style>` +
      R(1728, 51, [T(1738, 35, 52, 23, 'Page', '', ROBO), B(1801, 10, 65, 32, 'background:#555;border:2px solid #444;color:#fff', R(1803, 28, [T(1819, 23, 28, 23, '40', '', ROBO)])), T(1876, 35, 56, 23, '/ 436', '', ROBO)]);
  }
});

customElements.define('doc-view', class extends Base {
  html() {
    return `<style>:host{display:block;position:relative;width:1734px;height:1870px;background:#ededed}
    .top{display:flex;height:1843px}.gut{width:110px;flex:none;background:linear-gradient(90deg,#f8f8f8,#ededed 16px)}
    .sb{width:28px;background:#f0f0f0;display:flex;flex-direction:column;align-items:center}
    .th{width:26px;height:60px;background:#c1c1c1;margin-top:164px}
    .up{width:0;border:7px solid transparent;border-top:0;border-bottom:7px solid #505050;margin-top:13px}
    .dn{width:0;border:5px solid transparent;border-bottom:0;border-top:7px solid #505050;margin:auto 0 12px}
    .hb{display:flex;height:27px;background:#dcdcdc}.hb i{width:1530px;background:#c1c1c1}</style>
    <div class="top"><div class="gut"></div><book-page></book-page><div class="sb"><div class="up"></div><div class="th"></div><div class="dn"></div></div></div>
    <div class="hb"><i></i></div><page-badge></page-badge>`;
  }
});

customElements.define('browser-window', class extends Base {
  html() {
    return `<style>:host{display:flex;flex-direction:column;width:1849px;height:2106px;background:#e1e1e1;border:solid #5c5c5c;border-width:2px 2px 4px;border-left-color:#8a8a8a;padding:2px 5px 0;border-radius:10px 10px 0 0}
    .b{display:flex}</style><tab-strip></tab-strip><address-bar></address-bar><doc-toolbar></doc-toolbar><div class="b"><tool-column></tool-column><doc-view></doc-view></div>`;
  }
});

customElements.define('map-menu', class extends Base {
  html() {
    const m = (x, w, s) => T(x, 29, w, 26.5, s, 'color:#2a2a2a');
    return `<style>:host{display:block;height:48px}</style>` + R(1990, 48, [
      m(2022, 64, 'File'), m(2118, 64, 'Edit'), m(2216, 94, 'Insert'), m(2343, 80, 'Tools'), m(2455, 65, 'View'), m(2551, 65, 'Help'),
      B(2639, 9, 2, 26, 'background:#ddd'), T(2663, 29, 238, 25, 'Chapter_02.xmind', 'color:#2a2a2a'), T(2923, 29, 120, 25, '– Edited', 'color:#858585'),
      I(3610, 21, 20, 2, 'line', '#8a8a8a'), I(3698, 11, 20, 20, 'sq', '#8a8a8a'), I(3788, 12, 18, 18, 'xthin', '#8a8a8a')]);
  }
});

// Toolbar button: a white tile with a caption under it
customElements.define('tool-button', class extends Base {
  html() {
    const a = n => this.getAttribute(n), on = this.hasAttribute('on');
    const iw = +a('iw'), lw = a('label').length * 13.45;
    return `<style>:host{display:flex;flex-direction:column;align-items:center;width:93px;height:90px}
    .t{width:93px;height:52px;flex:none;border-radius:8px;background:${on ? '#fff' : '#fdfdfd'};border:1px solid ${on ? '#e2e2e2' : '#efefef'};box-shadow:0 1px 2px ${on ? '#0004' : '#0001'};display:flex;align-items:center;justify-content:center;color:${on ? '#000' : '#969696'}}
    .l{font:22.400px/24px ${MONO};margin-top:9.500px;color:${on ? '#444' : '#b4b4b4'}}</style>
    <div class="t"><ui-icon name="${a('icon')}" w="${iw}" h="${a('ih')}"></ui-icon></div><div class="l"><fit-text w="${lw}">${a('label')}</fit-text></div>`;
  }
});

customElements.define('map-toolbar', class extends Base {
  html() {
    const b = (x, l, ic, iw, ih, on = '') => B(x, 0, 93, 90, '', `<tool-button label="${l}" icon="${ic}" iw="${iw}" ih="${ih}" ${on}></tool-button>`);
    return `<style>:host{display:block;height:102px;border-bottom:3px solid #e4e4e4}</style>` + R(1990, 99, [
      B(2022, 19, 201, 56, 'background:#e5e5e5;border-radius:28px', R(2022, 56, [T(2053, 37.5, 140, 28, 'Mind Map', 'font-weight:bold;color:#000')])),
      T(2256, 56.5, 140, 28, 'Outliner', 'color:#848484'),
      b(2443, 'Topic', 'topic', 40, 30), b(2568, 'Subtopic', 'sub', 46, 16), b(2728, 'Relationship', 'rel', 43, 26, 'on'), b(2881, 'Summary', 'sum', 40, 33),
      b(3007, 'Boundary', 'bound', 40, 32), b(3133, 'Note', 'note', 40, 32), b(3251, 'Insert', 'ins', 28, 28), b(3372, 'ZEN', 'zen', 37, 32, 'on'), b(3490, 'Share', 'shr', 32, 34, 'on'),
      B(3612, 5, 196, 52, 'background:linear-gradient(90deg,#fff 97px,#ccc 97px 98px,#e4e4e4 98px);border:1px solid #e0e0e0;border-radius:8px;box-shadow:0 1px 3px #0004', R(3613, 50, [
        I(3644, 10, 32, 31, 'smile', '#000'), I(3744, 9, 29, 31, 'fmt', '#000'),]) + R(3613, 30, [T(3634, 28.5, 54, 22.4, 'Icon', 'color:#444'), T(3718, 28.5, 81, 22.4, 'Format', 'color:#444')]))]);
  }
});

customElements.define('mind-map', class extends Base {
  html() {
    const P = (...a) => a.map(d => `<path d="${d}"/>`).join('');
    const t = (x, y, w, fs, s, st = '') => `<text x="${x}" y="${y}" font-size="${fs}" ${w ? `textLength="${w}" lengthAdjust="spacingAndGlyphs"` : ''} style="${st}">${s}</text>`;
    const BI = 'font-weight:700;font-style:italic', IT = 'font-style:italic', BO = 'font-weight:700', MI = `font-style:italic;font-family:${SERIF}`, MU = `font-family:${SERIF}`;
    const i = s => `<tspan font-style="italic">${s}</tspan>`;
    const fh = (x, y) => t(x + 5, y, 0, 36, 'f', MI) + t(x + 6, y - 6, 0, 36, 'ˆ', MU);
    return `<style>:host{display:block;width:1284px;height:1876px;background:#b9b9b9;overflow:hidden}path{fill:none;stroke:#8a8a8a;stroke-width:2.400}text{font-family:${OPEN};fill:#3a3a3a}</style>
    <svg width="1284" height="1876" viewBox="1990 204 1284 1876"><rect x="1989" y="548" width="7" height="60" rx="3" fill="#555"/>` + P(
      'M1996 578H2015L2031 204', 'M2015 578L2052 576H2246', 'M2015 578L2051 1374.500H2404', 'M2246 576L2282 252H2495L2508 204', 'M2495 252L2531 385H3280',
      'M2246 576L2282 635H2526', 'M2246 576L2282 900.500H2667', 'M2526 635L2562 516H2999', 'M2526 635L2562 648H3017', 'M2526 635L2562 754H3006',
      'M2667 900L2703 838H2861', 'M2667 900L2703 963H2883', 'M2861 838L2897 810H3280', 'M2861 838L2897 866H3280', 'M2883 963L2919 922H3248', 'M2883 963L2919 1003H3280',
      'M2404 1374L2440 1230H2810', 'M2404 1374L2440 1520.500H2880', 'M2810 1230L2846 1139H2969', 'M2810 1230L2846 1321H3280', 'M2969 1139L3005 1097H3280', 'M2969 1139L3005 1181H3202',
      'M3202 1181L3238 1153H3280', 'M3202 1181L3238 1209H3280', 'M2880 1520L2916 1458H3280', 'M2880 1520L2916 1583H3280', 'M3170 200L3199 239H3280') +
      t(2317, 235, 24, 36, 'Ŷ', MI) + t(2350, 237, 25, 38, '=', MU) + fh(2387, 235) + t(2410, 235, 50, 36, `(${i('X')})`, MU) +
      t(2562, 368, 138, 36, `${i('E')}(${i('Y')} − ${i('Ŷ')})`, MU) + t(2701, 355, 11, 25, '2', MU) +
      t(2723, 370, 25, 38, '=', MU) + t(2758, 368, 102, 36, `${i('E')}[${i('f')}(${i('X')})`, MU) +
      t(2869, 370, 23, 38, '+', MU) + t(2901, 368, 14, 36, 'ϵ', MU) + t(2923, 368, 22, 36, '−', MU) + fh(2956, 368) + t(2979, 368, 59, 36, `(${i('X')})]`, MU) + t(3040, 355, 11, 25, '2', MU) +
      t(3063, 370, 24, 38, '=', MU) + t(3098, 368, 76, 36, `[${i('f')}(${i('X')})`, MU) + t(3185, 368, 22, 36, '−', MU) + fh(3218, 368) + t(3241, 368, 0, 36, `(${i('X')}`, MU) +
      t(3227, 223, 0, 22, 'Whic') +
      t(2080, 555.5, 101, 34, 'Why is', BI) + t(2205, 555.5, 0, 40, 'f', MI) +
      t(2311, 615, 186, 33, 'Interference', IT) +
      t(2590, 476, 392, 20, 'Identify the important predictors among a', BI) + t(2590, 501, 199, 20, 'large set of variables.', BI) +
      t(2590, 557.5, 372, 20, 'To understand the relationship between', BI) + t(2590, 583, 411, 20, 'dependent variable and predictors. (positive', BI) + t(2590, 608.5, 379, 20, 'or negative relationship; main effect and', BI) + t(2590, 633.5, 139, 20, 'interact effect)', BI) +
      t(2590, 689, 363, 20, 'To known the relationship between the', BI) + t(2590, 714, 400, 20, 'predictors and dependent variable is linear', BI) + t(2590, 739.5, 262, 20, 'or more complex non-linear.', BI) +
      t(2355, 849.5, 233, 26, 'The choice between', BI) + t(2311, 883, 328, 26, 'Prediction and Interference', BI) +
      t(2732, 823, 100, 20, 'Prediction', BO) + t(2732, 948, 121, 20, 'Interference', BO) +
      t(2924, 795.5, 318, 20, 'complex model could predict more') + t(3249, 795.5, 0, 20, 'acc') +
      t(2924, 851.5, 346, 20, 'But complex model is hard to explain.') + t(2947, 907, 291, 20, 'Simple model is easy to explain.') +
      t(2947, 963.5, 307, 20, "But simple model couldn't predict") + t(3261, 963.5, 0, 20, 'ac') + t(2947, 989, 171, 20, 'as complex model.') +
      t(3032, 1080, 138, 25.5, 'select model', IT) + t(3032, 1164, 141, 25.5, 'fitting model', IT) + t(2874, 1122, 64, 25.5, 'Steps', BI) +
      t(2874, 1304, 371, 25.5, 'Advantages and Disadvantages', BI) + t(2469, 1209.5, 312, 33, 'parametric methods', IT) +
      t(3262, 1046, 0, 25.5, 'n') + t(3263, 1080, 0, 25.5, 'a') + t(3266, 1137.5, 0, 21, 'c', BO) + t(3266, 1193, 0, 21, 'c', BO) +
      t(2079, 1355, 261, 34, 'How to Estimate', BI) + t(2363, 1355, 0, 40, 'f', MI) + t(2469, 1499.5, 381, 33, 'non-parametric methods', IT) +
      t(2945, 1440, 124, 25.5, 'Defination', BI) + t(3163, 1418, 73, 20, 'seek an', BO) + t(3242, 1418, 0, 20, 'est', BO) + t(3163, 1444.5, 82, 20, 'the data', BO) + t(3251, 1444.5, 0, 20, 'po', BO) +
      t(2944, 1565, 330, 25.5, 'Advantages and Disadvanta', BI) + `</svg>`;
  }
});

customElements.define('map-status', class extends Base {
  html() {
    const rd = `border-radius:16px;background:#f0f0f0;color:#000;padding:8px`;
    return `<style>:host{display:block;height:50px;border-top:2px solid #e4e4e4;background:#fff;color:#000}</style>` + R(1990, 48, [
      T(2812, 32, 145, 26.7, 'Topic: 67'), B(2972, 0, 2, 48, 'background:#e4e4e4'), I(2992, 10, 34, 29, 'map', '#000'), B(3042, 0, 2, 48, 'background:#e4e4e4'),
      B(3060, 8, 32, 32, rd, '<svg width="16" height="16"><path d="M0 8H16" stroke="#000" stroke-width="3"/></svg>'),
      B(3108, 8, 32, 32, rd, '<svg width="16" height="16"><path d="M0 8H16M8 0V16" stroke="#000" stroke-width="3"/></svg>'),
      T(3173, 32, 49, 27, '70%'), I(3243, 10, 18, 28, 'chev2', '#000')]);
  }
});

customElements.define('map-stage', class extends Base {
  html() {
    return `<style>:host{display:block;width:1314px;height:1956px}.a{display:flex;height:1876px}.v{width:30px;padding:813px 0 0 8px}.v i{display:block;width:14px;height:627px;border-radius:7px;background:#e0e0e0}
    .h{height:30px;padding:8px 0 0 404px}.h i{display:block;width:270px;height:14px;border-radius:7px;background:#dfdfdf}</style>
    <div class="a"><mind-map></mind-map><div class="v"><i></i></div></div><div class="h"><i></i></div><map-status></map-status>`;
  }
});

customElements.define('theme-preview', class extends Base {
  html() {
    const b = (x, y, f = '#6a6a6a') => `<rect x="${x}" y="${y}" width="58" height="31" fill="${f}"/><text x="${x + 12.5}" y="${y + 20.5}" textLength="33" font-size="13.500" fill="#fff">Topic</text>`;
    return `<style>:host{display:block;width:464px;height:267px;border-radius:10px;background:#b9b9b9;box-shadow:0 1px 6px #0003}text{font-family:${OPEN}}</style>
    <svg width="464" height="267" viewBox="3342 316 464 267"><g fill="none" stroke="#3c3c3c" stroke-width="1.500"><path d="M3479 415.500H3495L3513 448M3479 470H3506M3479 524.500H3495L3513 492M3646 423H3631L3615 448M3618 493L3636 517H3652"/></g>
    <path d="M3479 398Q3506 383.500 3550 384Q3608 384 3640 402" fill="none" stroke="#d6d6d6" stroke-width="2"/><path d="M3634 402L3644 404L3641 396z" fill="#d6d6d6"/>
    <path d="M3415 400H3408V485H3415M3401 443H3408" fill="none" stroke="#d0d0d0" stroke-width="1.500"/><rect x="3362" y="432.500" width="32" height="21" rx="4" fill="#d4d4d4"/>
    <path d="M3656 482V467Q3656 463 3660 463H3706Q3710 463 3710 467V482z" fill="#d4d4d4"/><rect x="3645.500" y="482" width="140" height="56" rx="6" fill="#c8c8c8" stroke="#dedede" stroke-width="1.500" stroke-dasharray="4 2"/>
    <path d="M3710 516.500H3720L3737 506H3778M3720 516.500L3737 527H3778" fill="none" stroke="#777" stroke-width="1.300"/><text x="3751" y="500" font-size="9.500" textLength="24" fill="#333">topic</text><text x="3751" y="522" font-size="9.500" textLength="24" fill="#333">topic</text>` +
      b(3421.5, 400) + b(3421.5, 455) + b(3421.5, 509) + b(3646, 408) + b(3652, 501) +
      `<rect x="3506" y="447" width="112" height="46" fill="#3a3a3a"/><text x="3529" y="477" font-size="19" font-weight="600" textLength="66" lengthAdjust="spacingAndGlyphs" fill="#fff">Central</text></svg>`;
  }
});

customElements.define('check-box', class extends Base {
  html() {
    const on = this.hasAttribute('on');
    return `<style>:host{display:block;width:32px;height:32px;border-radius:6px;${on ? 'background:#585858' : 'background:#fff;border:2px solid #ccc;box-shadow:inset 0 1px 1px #0002'}}</style>` +
      (on ? `<svg width="32" height="32"><path d="M8 17L14.500 22.500L23.500 8" fill="none" stroke="#fff" stroke-width="3.600"/></svg>` : '');
  }
});

customElements.define('format-panel', class extends Base {
  html() {
    const ck = (y, on) => B(3342, y, 32, 32, '', `<check-box ${on ? 'on' : ''}></check-box>`);
    const lab = (b, s) => T(3386, b, s.length * 16.1, 26.7, s, 'color:#111');
    const hd = (b, s) => T(3342, b, s.length * 17.3, 28, s, 'font-weight:bold;color:#1c1c1c');
    const wb = 'background:#fff;border:1px solid #e6e6e6;border-radius:8px;box-shadow:0 1px 2px #0003;';
    const help = (s) => R(3306, 39, [T(3342, 26, s.length * 16.05, 26.7, s, 'color:#9a9a9a')]);
    const sw = ['#858585', '#cacaca', '#b8b8b8', '#959595', '#9e9e9e', '#4a4a4a'];
    return `<style>:host{display:flex;flex-direction:column;width:536px;height:1956px;border-left:2px solid #e4e4e4;color:#111}
    .hr{height:2px;background:#e6e6e6;flex:none}.in{margin:0 34px 0 36px}</style>` +
      R(3306, 72, [T(3397, 46, 86, 28, 'Style', 'color:#808080'), B(3574, 0, 266, 72, 'background:#585858;color:#fff', R(3574, 72, [T(3682, 46, 52, 28, 'Map')]))]) + `<div class="hr"></div>` +
      R(3306, 304, [B(3342, 38, 464, 267, '', '<theme-preview></theme-preview>')], 'height:305px') +
      R(3306, 101, [B(3342, 21, 464, 52, wb, R(3343, 50, [T(3494, 32, 161, 26.7, 'All Themes', 'color:#000')]))], 'height:101px') + `<div class="hr"></div>` +
      R(3306, 117, [ck(44, 1), lab(67.5, 'Background Color'), B(3726, 36, 80, 47, 'background:#b9b9b9;border:1px solid #aaa;border-radius:8px')]) + `<div class="hr"></div>` +
      R(3306, 125, [hd(72, 'Structure'), B(3654, 31, 152, 63, wb, R(3655, 61, [I(3677, 16, 64, 30, 'struct', '#000'), I(3774, 26, 16, 10, 'chev', '#000')]))]) + `<div class="hr in"></div>` +
      R(3306, 76, [ck(34, 1), lab(57, 'Multi-branch Color')]) +
      R(3306, 58, [B(3382, 1, 424, 48, wb + 'display:flex', `<div style="display:flex;margin:13px 0 0 55px;width:289px;height:20px;border-radius:4px;overflow:hidden">` + sw.map(c => `<i style="flex:1;background:${c}"></i>`).join('') + `</div><div style="margin:9px 0 0 46px;color:#000"><ui-icon name="chev2" w="18" h="28"></ui-icon></div>`)]) +
      R(3306, 75, [ck(11), lab(35, 'Tapered Line')]) + `<div class="hr"></div>` +
      R(3306, 70, [hd(56, 'Advanced Layout')]) +
      R(3306, 52, [ck(10), lab(34, 'Auto Balance Map')]) + R(3306, 52, [ck(11), lab(34, 'Branch Free–positioning')]) + R(3306, 52, [ck(11), lab(34, 'Flexible Floating Topic')]) + R(3306, 74, [ck(11), lab(34, 'Topic Overlap')]) + `<div class="hr"></div>` +
      R(3306, 74, [hd(56, 'CJK Font')]) +
      R(3306, 62, [B(3342, 2, 464, 47, wb, R(3343, 45, [T(3358, 30.5, 113, 26.7, 'Default', 'color:#000'), I(3772, 8, 18, 28, 'chev2', '#000')]))]) +
      help('After setting Chinese,') + help('Japanese and Korean fonts,') + help('mixed layout with western') + help('typeface displays better.');
  }
});

customElements.define('map-window', class extends Base {
  html() {
    return `<style>:host{display:block;width:1850px;height:2106px;background:#fafafa}.b{display:flex}</style><map-menu></map-menu><map-toolbar></map-toolbar><div class="b"><map-stage></map-stage><format-panel></format-panel></div>`;
  }
});

customElements.define('desk-top', class extends Base {
  html() {
    return `<style>:host{display:block;width:3840px;height:2160px}.m{display:flex}</style><top-bar></top-bar><div class="m"><app-dock></app-dock><browser-window></browser-window><map-window></map-window></div>`;
  }
});
</script>
</body>
</html>
